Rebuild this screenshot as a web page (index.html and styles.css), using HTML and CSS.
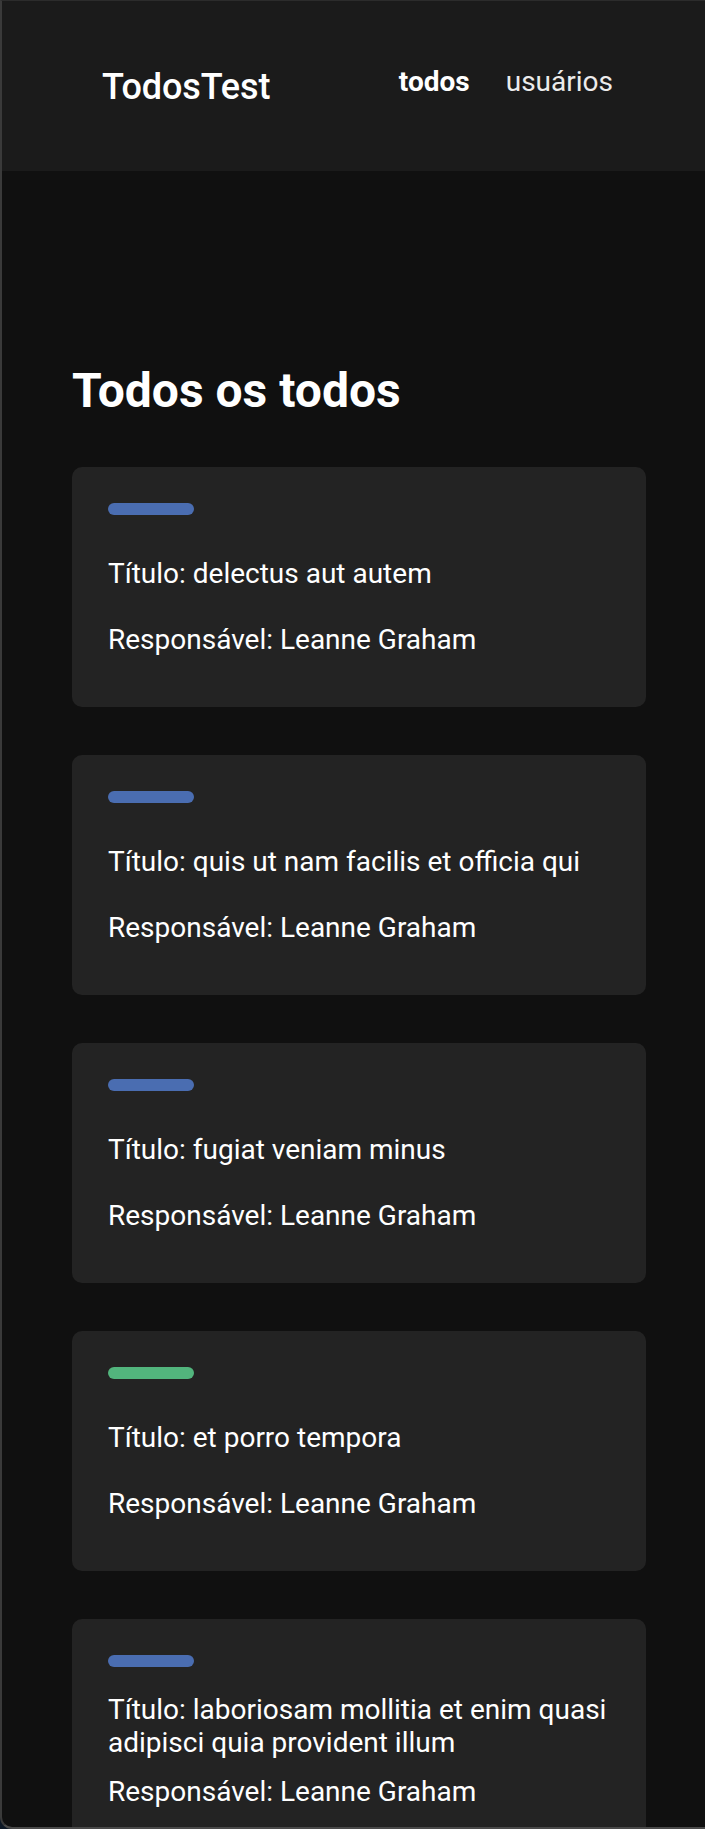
FILE: index.html
```html
<!DOCTYPE html>
<html lang="pt-BR">
<head>
<meta charset="utf-8">
<title>TodosTest</title>
<link rel="stylesheet" href="styles.css">
</head>
<body>
<div class="window">
  <header class="topbar">
    <div class="logo">TodosTest</div>
    <nav class="nav">
      <a class="nav-link active" href="#">todos</a>
      <a class="nav-link" href="#">usuários</a>
    </nav>
  </header>
  <main class="main">
    <h1 class="page-title">Todos os todos</h1>
    <div class="list">
      <div class="card">
        <span class="status status-open"></span>
        <p class="card-title">Título: delectus aut autem</p>
        <p class="card-owner">Responsável: Leanne Graham</p>
      </div>
      <div class="card">
        <span class="status status-open"></span>
        <p class="card-title">Título: quis ut nam facilis et officia qui</p>
        <p class="card-owner">Responsável: Leanne Graham</p>
      </div>
      <div class="card">
        <span class="status status-open"></span>
        <p class="card-title">Título: fugiat veniam minus</p>
        <p class="card-owner">Responsável: Leanne Graham</p>
      </div>
      <div class="card">
        <span class="status status-done"></span>
        <p class="card-title">Título: et porro tempora</p>
        <p class="card-owner">Responsável: Leanne Graham</p>
      </div>
      <div class="card">
        <span class="status status-open"></span>
        <p class="card-title">Título: laboriosam mollitia et enim quasi adipisci quia provident illum</p>
        <p class="card-owner">Responsável: Leanne Graham</p>
      </div>
    </div>
  </main>
</div>
</body>
</html>
```
FILE: styles.css
```css
html, body {
  margin: 0;
  padding: 0;
}
body {
  background: #0d1826;
  font-family: Roboto, "Noto Sans", "Liberation Sans", sans-serif;
  color: #ffffff;
}
.window {
  box-sizing: border-box;
  height: 1829px;
  overflow: hidden;
  background: #101010;
  border-top: 1px solid #2c2c2c;
  border-left: 2px solid #3a3a3a;
  border-bottom: 2px solid #4a4a4a;
  border-bottom-left-radius: 12px;
}
.topbar {
  box-sizing: border-box;
  height: 170px;
  background: #1b1b1b;
  display: flex;
  justify-content: space-between;
  align-items: flex-start;
  padding: 64px 92px 0 100px;
}
.logo {
  font-size: 36px;
  font-weight: 500;
  line-height: normal;
  margin-top: 1px;
  letter-spacing: -0.1px;
}
.nav {
  display: flex;
  gap: 36px;
}
.nav-link {
  font-size: 28px;
  line-height: normal;
  color: #ececec;
  text-decoration: none;
}
.nav-link.active {
  font-weight: 700;
  color: #ffffff;
}
.main {
  padding: 191px 0 0 70px;
}
.page-title {
  margin: 0 0 48px;
  font-size: 48px;
  font-weight: 700;
  line-height: normal;
}
.list {
  display: flex;
  flex-direction: column;
  gap: 48px;
}
.card {
  box-sizing: border-box;
  width: 574px;
  height: 240px;
  flex-shrink: 0;
  background: #232323;
  border-radius: 10px;
  padding: 36px 24px 51px 36px;
  display: flex;
  flex-direction: column;
  justify-content: space-between;
  align-items: flex-start;
}
.status {
  display: block;
  width: 86px;
  height: 12px;
  border-radius: 6px;
  margin-bottom: 9px;
}
.status-open {
  background: #4a6db1;
}
.status-done {
  background: #52b57d;
}
.card-title,
.card-owner {
  margin: 0;
  font-size: 28px;
  line-height: normal;
}
```
